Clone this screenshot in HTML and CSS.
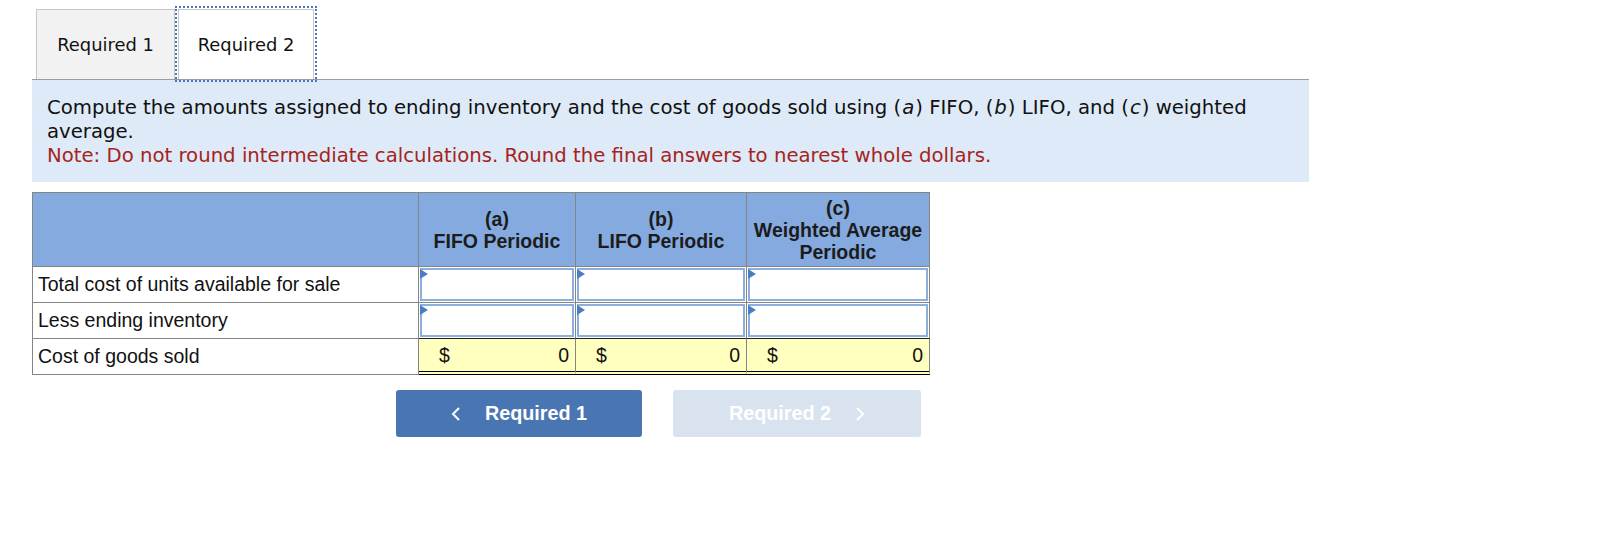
FILE: index.html
```html
<!DOCTYPE html>
<html lang="en">
<head>
<meta charset="utf-8">
<title>Required 2</title>
<link rel="stylesheet" href="styles.css">
</head>
<body>
<div class="page">
  <div class="tabs">
    <div class="tab">Required 1</div>
    <div class="tab tab-active">Required 2</div>
  </div>
  <div class="prompt">
    <p class="q">Compute the amounts assigned to ending inventory and the cost of goods sold using (<i>a</i>) FIFO, (<i>b</i>) LIFO, and (<i>c</i>) weighted average.</p>
    <p class="note">Note: Do not round intermediate calculations. Round the final answers to nearest whole dollars.</p>
  </div>
  <table class="grid">
    <thead>
      <tr>
        <th class="c-label"></th>
        <th class="c-a">(a)<br>FIFO Periodic</th>
        <th class="c-b">(b)<br>LIFO Periodic</th>
        <th class="c-c">(c)<br>Weighted Average<br>Periodic</th>
      </tr>
    </thead>
    <tbody>
      <tr>
        <td class="label">Total cost of units available for sale</td>
        <td class="inp"><div class="box"></div></td>
        <td class="inp"><div class="box"></div></td>
        <td class="inp"><div class="box"></div></td>
      </tr>
      <tr>
        <td class="label">Less ending inventory</td>
        <td class="inp inp-last"><div class="box"></div></td>
        <td class="inp inp-last"><div class="box"></div></td>
        <td class="inp inp-last"><div class="box"></div></td>
      </tr>
      <tr>
        <td class="label">Cost of goods sold</td>
        <td class="total"><span class="cur">$</span><span class="amt">0</span></td>
        <td class="total"><span class="cur">$</span><span class="amt">0</span></td>
        <td class="total"><span class="cur">$</span><span class="amt">0</span></td>
      </tr>
    </tbody>
  </table>
  <div class="nav">
    <button class="btn btn-prev"><svg class="chev" width="10" height="14" viewBox="0 0 10 14"><polyline points="8,1 2,7 8,13" fill="none" stroke="#fff" stroke-width="2"/></svg><span>Required 1</span></button>
    <button class="btn btn-next"><span>Required 2</span><svg class="chev" width="10" height="14" viewBox="0 0 10 14"><polyline points="2,1 8,7 2,13" fill="none" stroke="#fff" stroke-width="2"/></svg></button>
  </div>
</div>
</body>
</html>
```
FILE: styles.css
```css
html, body {
  margin: 0;
  padding: 0;
  background: #ffffff;
}

.page {
  padding: 9px 0 0 32px;
}

.tabs {
  display: flex;
  margin-left: 4px;
  height: 70px;
}

.tab {
  box-sizing: border-box;
  height: 70px;
  display: flex;
  align-items: center;
  justify-content: center;
  font-family: "DejaVu Sans", Verdana, sans-serif;
  font-size: 17.9px;
  color: #111;
  border: 1px solid #c6c6c6;
  border-bottom: none;
  background: #f2f2f2;
  width: 139px;
}

.tab-active {
  background: #ffffff;
  width: 136px;
  margin-left: 3px;
  outline: 2px dotted #4a78c0;
  outline-offset: 1px;
}

.prompt {
  width: 1277px;
  box-sizing: border-box;
  background: #deeaf7;
  border-top: 1px solid #9c9c9c;
  padding: 16px 15px 14px 15px;
  font-family: "DejaVu Sans", Verdana, sans-serif;
  font-size: 19.7px;
  line-height: 24px;
  color: #111;
}

.prompt p {
  margin: 0;
}

.prompt i {
  display: inline-block;
  padding: 0 1px 0 1px;
}

.prompt .note {
  color: #a52420;
}

.grid {
  margin-top: 10px;
  border-collapse: separate;
  border-spacing: 0;
  border-top: 1px solid #858585;
  border-left: 1px solid #858585;
  font-family: "Liberation Sans", Arial, sans-serif;
  font-size: 19.5px;
  color: #111;
}

.grid th, .grid td {
  box-sizing: border-box;
  border-right: 1px solid #858585;
  border-bottom: 1px solid #858585;
  padding: 0;
}

.grid th {
  height: 74px;
  background: #84aadf;
  font-weight: bold;
  line-height: 22px;
  text-align: center;
  color: #1c1c1c;
}

.c-label { width: 386px; }
.c-a { width: 157px; }
.c-b { width: 171px; }
.c-c { width: 183px; }

.grid td {
  height: 36px;
}

.label {
  padding-left: 5px !important;
  text-align: left;
}

.inp {
  padding: 1px 1px 1px 1px !important;
}

.inp-last {
  border-bottom-color: #222 !important;
}

.box {
  position: relative;
  box-sizing: border-box;
  height: 33px;
  border: 2px solid #8dafdf;
  background: #fff;
}

.box::before {
  content: "";
  position: absolute;
  left: -2px;
  top: -1px;
  width: 0;
  height: 0;
  border-top: 5px solid transparent;
  border-bottom: 5px solid transparent;
  border-left: 8px solid #4a7dc4;
}

.total {
  background: #ffffbf;
  border-bottom: 4px double #000 !important;
  padding: 0 6px 0 20px !important;
}

.total .cur {
  float: left;
}

.total .amt {
  float: right;
}

.total::after {
  content: "";
  display: block;
  clear: both;
}

.nav {
  display: flex;
  gap: 31px;
  margin-top: 15px;
  padding-left: 364px;
}

.btn {
  box-sizing: border-box;
  height: 47px;
  border: none;
  border-radius: 3px;
  display: flex;
  align-items: center;
  justify-content: center;
  gap: 24px;
  font-family: "Liberation Sans", Arial, sans-serif;
  font-weight: bold;
  font-size: 19.8px;
  color: #fff;
  padding: 0;
}

.btn-prev {
  width: 246px;
  background: #4a75b3;
}

.btn-next {
  width: 248px;
  background: #d9e3ef;
}

.chev {
  display: block;
}
```
